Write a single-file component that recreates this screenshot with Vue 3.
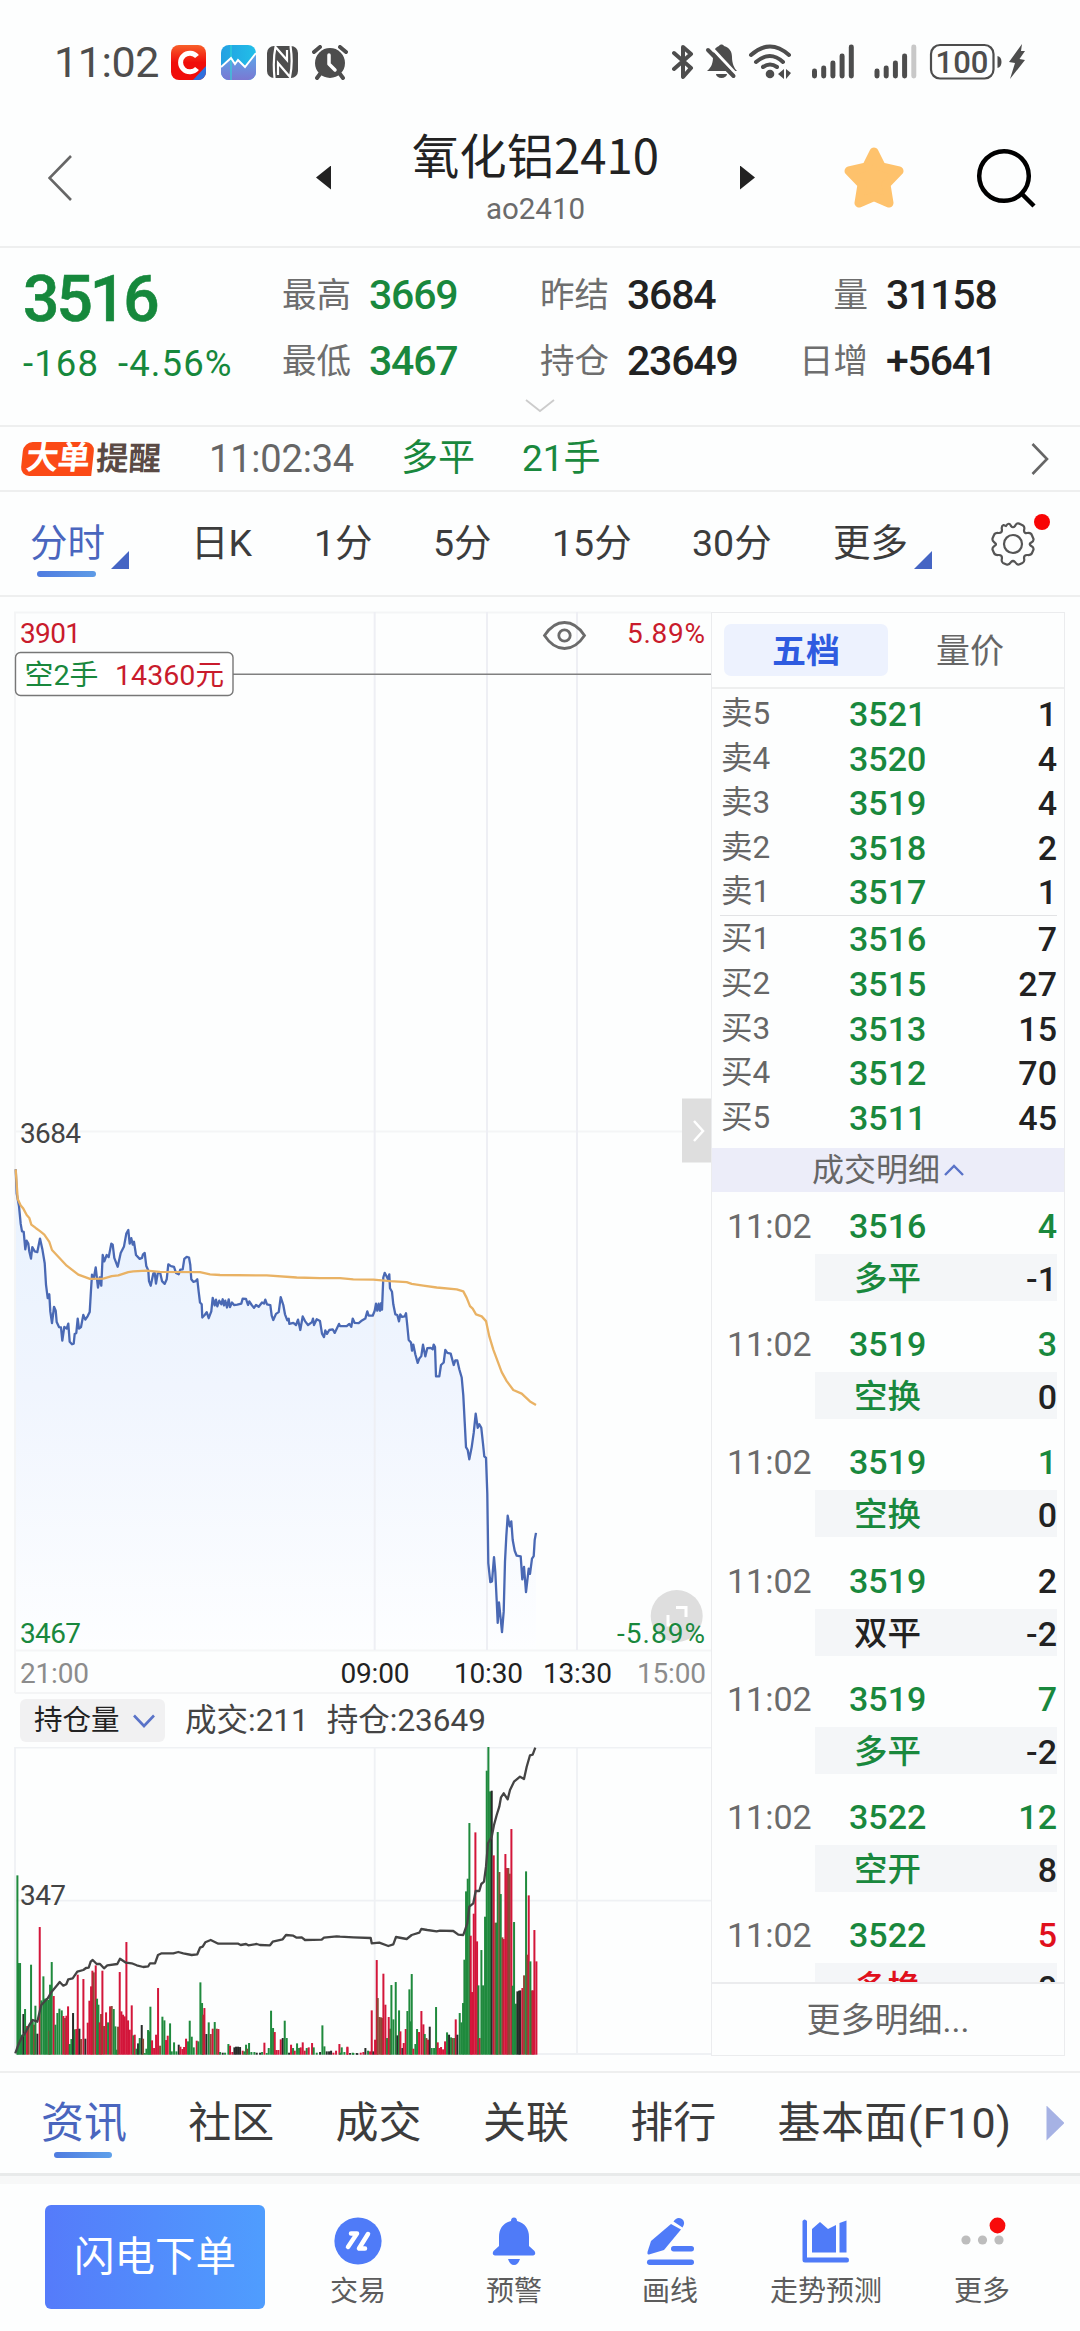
<template>
  <div class="page">
    <div class="status">
      <span class="clock">11:02</span>
      <svg class="app-icon" width="35" height="35" viewBox="0 0 35 35">
        <defs>
          <linearGradient id="gRed" x1="0" y1="0" x2="0" y2="1">
            <stop offset="0" stop-color="#f8602a" />
            <stop offset="0.5" stop-color="#f00d0a" />
          </linearGradient>
          <clipPath id="cApp"><rect width="35" height="35" rx="8" /></clipPath>
        </defs>
        <g clip-path="url(#cApp)">
          <rect width="35" height="35" fill="url(#gRed)" />
          <path d="M35 21L22 35H35Z" fill="#2f6fdc" />
          <path d="M26 11.500A9.300 9.300 0 1 0 26 23.500" fill="none" stroke="#fff" stroke-width="5" />
        </g>
      </svg>
      <svg class="wave-icon" width="35" height="35" viewBox="0 0 35 35">
        <defs>
          <linearGradient id="gSky" x1="0" y1="0" x2="1" y2="0">
            <stop offset="0" stop-color="#23a0e2" />
            <stop offset="1" stop-color="#22bfe8" />
          </linearGradient>
          <linearGradient id="gSea" x1="0" y1="0" x2="0" y2="1">
            <stop offset="0" stop-color="#5aa9ec" />
            <stop offset="1" stop-color="#7a78d2" />
          </linearGradient>
        </defs>
        <g clip-path="url(#cApp)">
          <rect width="35" height="35" fill="url(#gSky)" />
          <path d="M0 22L10 13L14 19L17 15L24 22L35 8V35H0Z" fill="url(#gSea)" />
          <path d="M10 0V35" stroke="#2fd3d8" stroke-width="1.2" />
          <path d="M0 22L10 13L14 19L17 15L24 22L35 8" fill="none" stroke="#fff" stroke-width="2" />
        </g>
      </svg>
      <svg class="nfc-icon" width="31" height="32" viewBox="0 0 31 32">
        <rect width="31" height="32" rx="7" fill="#4d4d4d" />
        <path d="M7.500 32C6.500 22 6.500 10 8.500 1L20 14V4M23.500 0C25 10 25 22 23 31L11 17V29" fill="none" stroke="#fff" stroke-width="2.200" />
      </svg>
      <svg class="alarm-icon" width="36" height="35" viewBox="0 0 36 35">
        <circle cx="18" cy="18" r="15" fill="#4d4d4d" />
        <path d="M2 7L8 2M34 7L28 2M8 29L5 33M28 29L31 33" stroke="#4d4d4d" stroke-width="4" stroke-linecap="round" />
        <path d="M17 10V19L23 25" fill="none" stroke="#fff" stroke-width="3.500" stroke-linecap="round" stroke-linejoin="round" />
      </svg>
      <svg class="sys-icons" width="354" height="40" viewBox="672 42 354 40">
        <g fill="#4d4d4d">
          <path d="M674 53L691 68L683 77V47L691 54L674 69" fill="none" stroke="#4d4d4d" stroke-width="4" stroke-linejoin="round" stroke-linecap="round" />
          <path d="M707 71C712 67 713 62 713 57C713 50 716 47 719 46C720 44 723 44 724 46C730 48 732 52 732 57C732 63 734 68 737 71Z" />
          <path d="M716 74H727A5.500 4 0 0 1 716 74" />
          <path d="M710 46L737 75" stroke="#fff" stroke-width="3" />
          <path d="M708 50L733.500 76" stroke="#4d4d4d" stroke-width="4" stroke-linecap="round" />
          <path d="M751 55Q770 38 789 55M756 62Q770 50 783 62M763 67Q770 62 777 67" fill="none" stroke="#4d4d4d" stroke-width="4" stroke-linecap="round" />
          <circle cx="770" cy="74" r="4.300" />
          <path d="M784 69V79L778 74Z M786 69V79L791 73Z" />
          <rect v-for="(h, i) in [10, 13, 18, 25, 34]" :key="'a' + i" :x="812 + i * 9.200" :y="78.500 - h" width="5" :height="h" rx="2.400" />
          <rect v-for="(h, i) in [10, 13, 18, 25, 34]" :key="'b' + i" :x="874.500 + i * 9.200" :y="78.500 - h" width="5" :height="h" rx="2.400" :fill="i === 4 ? '#c8c8c8' : '#4d4d4d'" />
          <rect x="931" y="45" width="62.500" height="33.500" rx="9" fill="none" stroke="#4d4d4d" stroke-width="2.200" />
          <text x="962" y="73" class="batt" text-anchor="middle">100</text>
          <path d="M997.500 56Q1001.500 57 1001.500 62Q1001.500 67 997.500 68Z" />
          <path d="M1022 44L1009 62L1015 63L1010 79L1025 60L1019.500 59L1025 51L1021 51Z" />
        </g>
      </svg>
    </div>

    <div class="header">
      <svg width="24" height="46" viewBox="0 0 24 46"><path d="M23 1L1.500 23L23 45" fill="none" stroke="#666" stroke-width="2.600" /></svg>
      <i class="tri-left"></i>
      <div class="title">
        <div class="name">氧化铝2410</div>
        <div class="code">ao2410</div>
      </div>
      <i class="tri-right"></i>
      <svg class="star" width="60" height="62" viewBox="0 0 60 62">
        <path d="M30 5L37.500 20L55 24L42 37.500L45 56L30 49.500L15 56L18 37.500L5 24L22.500 20Z" fill="#fec26c" stroke="#fec26c" stroke-width="9" stroke-linejoin="round" />
      </svg>
      <svg class="search" width="62" height="62" viewBox="0 0 62 62">
        <circle cx="29" cy="29" r="24.800" fill="none" stroke="#000" stroke-width="4.500" />
        <path d="M46 46L59 59" stroke="#000" stroke-width="4.500" />
      </svg>
    </div>

    <div class="quote">
      <div class="last">
        <div class="price">3516</div>
        <div class="change"><span>-168</span><span>-4.56%</span></div>
      </div>
      <div class="stats">
        <div v-for="s in stats" :key="s.label" class="stat">
          <span class="stat-label">{{ s.label }}</span>
          <span class="stat-value" :class="s.green ? 'green' : ''">{{ s.value }}</span>
        </div>
      </div>
      <svg class="expand" width="30" height="14" viewBox="0 0 30 14"><path d="M1 1L15 12L29 1" fill="none" stroke="#ccc" stroke-width="1.800" /></svg>
    </div>

    <div class="alert">
      <div class="badge"><span class="badge-hot">大单</span><span class="badge-text">提醒</span></div>
      <span class="alert-time">11:02:34</span>
      <span class="alert-kind">多平</span>
      <span class="alert-vol">21手</span>
      <svg class="alert-arrow" width="18" height="32" viewBox="0 0 18 32"><path d="M1.500 1L16 16L1.500 31" fill="none" stroke="#666" stroke-width="2.600" /></svg>
    </div>

    <div class="periods">
      <div v-for="p in periods" :key="p.name" class="period" :class="{ active: p.active, corner: p.corner }">{{ p.name }}</div>
      <div class="gear">
        <svg width="44" height="44" viewBox="0 0 44 44" fill="none" stroke="#555" stroke-width="2.200">
          <path d="M15 4C17 0.500 19 1.500 20 4Q22 6.500 24 4C25 1.500 27 0.500 29 2L32 3.500C34.500 5 33 7 33 9Q33.500 11.500 36 11C39 10.500 40.500 11 41 13.500L42.500 17C43 19.500 41 20 39.500 21Q38 22 39.500 23.500C41 24.500 43 25 42.500 27.500L41 31C40 33.500 38 33 36 33Q33 33 33 36C33.500 38.500 34 40 31.500 41L28 42.500C26 43 25 41.500 24 40Q22 38 20 40C19 41.500 18 43.500 15.500 42.500L12 41C10 40 10.500 38 11 36Q11 33 8 33C5.500 33 4 33.500 3 31L1.500 27.500C1 25.500 3 24.500 4 23.500Q6 22 4 21C2.500 19.500 1 19 1.500 16.500L3 13C4 10.500 6 11 8 11Q11 11 11 8C10.500 6 10 4 12.500 3Z" stroke-linejoin="round" />
          <circle cx="22" cy="22" r="9" />
        </svg>
        <i class="dot"></i>
      </div>
    </div>

    <div class="main">
      <div class="charts">
        <svg class="chart" width="711" height="1097" viewBox="0 597 711 1097">
          <defs>
            <linearGradient id="gArea" gradientUnits="userSpaceOnUse" x1="0" y1="1170" x2="0" y2="1650">
              <stop offset="0" stop-color="#e8f2fe" />
              <stop offset="0.450" stop-color="#f0f5fe" />
              <stop offset="1" stop-color="#fdfeff" />
            </linearGradient>
          </defs>
          <path :d="areaPath" fill="url(#gArea)" />
          <g stroke="#eeeff4" stroke-width="2">
            <path d="M14 612.500H711M15 612V1693M15 1131.500H711M15 1650.500H711M15 1693H711" stroke="#f4f5f6" />
            <path d="M374.700 612V1650M487 612V1650M577 612V1650" />
          </g>
          <path :d="pricePath" class="line" stroke="#4a69b4" />
          <path :d="avgPath" class="line" stroke="#e9b264" />
          <path d="M233 674.300H711" stroke="#808080" stroke-width="1.600" />
          <rect x="15.500" y="652.500" width="217.500" height="43" rx="5" fill="#fff" stroke="#777" stroke-width="1.400" />
          <text x="24.500" y="684.500" class="lbl green" textLength="74" lengthAdjust="spacingAndGlyphs">空2手</text>
          <text x="115" y="684.500" class="lbl red" textLength="109" lengthAdjust="spacingAndGlyphs">14360元</text>
          <g fill="none" stroke="#6b6b6b" stroke-width="2.800">
            <path d="M544.500 635.500Q553 622.500 564.500 622.500T584.500 635.500Q576 648.500 564.500 648.500T544.500 635.500Z" />
            <circle cx="564.500" cy="635.500" r="5.700" />
          </g>
          <path d="M682 1098.500H711V1162.500H682Z" fill="#dedede" />
          <path d="M694 1121L703 1131L694 1141" fill="none" stroke="#fff" stroke-width="2.500" />
          <circle cx="676.700" cy="1616" r="26" fill="#dedede" />
          <path d="M676 1607.500H686V1617M668 1615V1625H677" fill="none" stroke="#fff" stroke-width="3" />
          <text x="20" y="643" class="lbl red" textLength="61">3901</text>
          <text x="627" y="643" class="lbl red" textLength="78">5.89%</text>
          <text x="20" y="1142.500" class="lbl dark" textLength="61">3684</text>
          <text x="20" y="1643" class="lbl green" textLength="61">3467</text>
          <text x="617" y="1643" class="lbl green" textLength="88">-5.89%</text>
          <text v-for="t in ticks" :key="t.text" :x="t.x" y="1683" class="lbl" :class="t.edge ? 'tick-edge' : 'tick'" textLength="69">{{ t.text }}</text>
        </svg>

        <div class="sub-head">
          <div class="chip">
            <span>持仓量</span>
            <svg width="22" height="14" viewBox="0 0 22 14"><path d="M1 1.500L11 12L21 1.500" fill="none" stroke="#5a73c8" stroke-width="2.600" /></svg>
          </div>
          <span class="sub-text">成交:211</span>
          <span class="sub-text">持仓:23649</span>
        </div>

        <svg class="chart" width="711" height="324" viewBox="0 1747 711 324">
          <g stroke="#eff1f4" stroke-width="1.800">
            <path d="M15 1747.500H711M15 1747V2054M15 1900.700H711M15 2054H711M374.700 1747V2054M487 1747V2054M577 1747V2054" />
          </g>
          <rect v-for="(b, i) in bars" :key="i" :x="b.x" :y="2054.700 - b.h" width="2" :height="b.h" :fill="b.fill" />
          <path :d="holdPath" class="line" stroke="#444" />
          <text x="20" y="1905" class="lbl dark" textLength="46">347</text>
        </svg>
      </div>

      <div class="book">
        <div class="book-tabs">
          <div class="book-tab on">五档</div>
          <div class="book-tab">量价</div>
        </div>
        <div class="levels">
          <div v-for="l in asks" :key="l[0]" class="level"><span>{{ l[0] }}</span><b>{{ l[1] }}</b><em>{{ l[2] }}</em></div>
          <div class="split"></div>
          <div v-for="l in bids" :key="l[0]" class="level"><span>{{ l[0] }}</span><b>{{ l[1] }}</b><em>{{ l[2] }}</em></div>
        </div>
        <div class="detail-head">
          <span>成交明细</span>
          <svg width="20" height="12" viewBox="0 0 20 12"><path d="M1 11L10 2L19 11" fill="none" stroke="#5a73c8" stroke-width="2.400" /></svg>
        </div>
        <div class="trades">
          <div v-for="(t, i) in trades" :key="i" class="trade">
            <div class="trade-top"><span>11:02</span><b>{{ t.price }}</b><em :class="t.volColor">{{ t.vol }}</em></div>
            <div class="trade-sub"><b :class="t.kindColor">{{ t.kind }}</b><em>{{ t.diff }}</em></div>
          </div>
        </div>
        <div class="more">更多明细...</div>
      </div>
    </div>

    <div class="info-tabs">
      <span class="info active">资讯</span>
      <span class="info">社区</span>
      <span class="info">成交</span>
      <span class="info">关联</span>
      <span class="info">排行</span>
      <span class="info">基本面(F10)</span>
      <i class="info-next"></i>
    </div>

    <div class="actions">
      <div class="order-btn">闪电下单</div>
      <div class="action">
        <svg width="48" height="48" viewBox="0 0 48 48">
          <circle cx="24" cy="24" r="23.600" fill="#4f7bf8" />
          <path d="M17 16.500H23L14 30M34 17L25 31.500H31" fill="none" stroke="#fff" stroke-width="4.500" stroke-linecap="round" stroke-linejoin="round" />
        </svg>
        <span>交易</span>
      </div>
      <div class="action">
        <svg width="48" height="48" viewBox="0 0 48 48" fill="#4f7bf8">
          <path d="M24 0.500C26 0.500 27 2 27 4C35 6 39 12 39 20V29L44.500 34C46 36.500 45 38.500 43 38.500H5C3 38.500 2 36.500 3.500 34L9 29V20C9 12 13 6 21 4C21 2 22 0.500 24 0.500Z" />
          <path d="M18 42H30Q28 48 24 48T18 42Z" />
        </svg>
        <span>预警</span>
      </div>
      <div class="action">
        <svg width="48" height="48" viewBox="0 0 48 48" fill="#4f7bf8">
          <path d="M25 7L35 12.500L18 33L3 37.500Q1 38 1.500 35L5 24Z" />
          <path d="M27.500 4.500Q31 -1 36 2Q40 5 36.500 10.500Z" />
          <rect x="25" y="29" width="23" height="5.500" rx="2.700" />
          <rect x="1" y="42.500" width="47" height="5.500" rx="2.700" />
        </svg>
        <span>画线</span>
      </div>
      <div class="action">
        <svg width="48" height="48" viewBox="0 0 48 48" fill="#4f7bf8">
          <path d="M0.500 4Q2.500 1 5 4V40.500H45Q47 40.500 47 43T45 45.500H3Q0.500 45.500 0.500 43Z" />
          <path d="M10 12L18 5L26 12L34 8V35.500H10Z" />
          <path d="M37.500 6L44.500 3.500V35.500H37.500Z" />
        </svg>
        <span>走势预测</span>
      </div>
      <div class="action">
        <svg width="48" height="48" viewBox="0 0 48 48">
          <circle cx="8" cy="23" r="4.600" fill="#bdbdbd" />
          <circle cx="24.500" cy="23" r="4.600" fill="#bdbdbd" />
          <circle cx="41" cy="23" r="4.600" fill="#bdbdbd" />
          <circle cx="39.500" cy="8.500" r="7.900" fill="#f80b0b" />
        </svg>
        <span>更多</span>
      </div>
    </div>
  </div>
</template>

<script setup>
const stats = [
  { label: '最高', value: '3669', green: true },
  { label: '昨结', value: '3684' },
  { label: '量', value: '31158' },
  { label: '最低', value: '3467', green: true },
  { label: '持仓', value: '23649' },
  { label: '日增', value: '+5641' },
]

const periods = [
  { name: '分时', active: true, corner: true },
  { name: '日K' },
  { name: '1分' },
  { name: '5分' },
  { name: '15分' },
  { name: '30分' },
  { name: '更多', corner: true },
]

const ticks = [
  { text: '21:00', x: 20, edge: true },
  { text: '09:00', x: 340.5 },
  { text: '10:30', x: 454 },
  { text: '13:30', x: 543 },
  { text: '15:00', x: 637, edge: true },
]

const asks = [['卖5', 3521, 1], ['卖4', 3520, 4], ['卖3', 3519, 4], ['卖2', 3518, 2], ['卖1', 3517, 1]]
const bids = [['买1', 3516, 7], ['买2', 3515, 27], ['买3', 3513, 15], ['买4', 3512, 70], ['买5', 3511, 45]]

const trades = [
  { price: 3516, vol: 4, volColor: 'green', kind: '多平', kindColor: 'green', diff: '-1' },
  { price: 3519, vol: 3, volColor: 'green', kind: '空换', kindColor: 'green', diff: '0' },
  { price: 3519, vol: 1, volColor: 'green', kind: '空换', kindColor: 'green', diff: '0' },
  { price: 3519, vol: 2, volColor: '', kind: '双平', kindColor: '', diff: '-2' },
  { price: 3519, vol: 7, volColor: 'green', kind: '多平', kindColor: 'green', diff: '-2' },
  { price: 3522, vol: 12, volColor: 'green', kind: '空开', kindColor: 'green', diff: '8' },
  { price: 3522, vol: 5, volColor: 'red', kind: '多换', kindColor: 'red', diff: '0' },
]

// series are split in night and day session, each with its own x origin
const DAY_X = 340

function toPoints(str, x0, y0, ky) {
  return str.trim().split(/\s+/).map((p) => {
    const [x, y] = p.split(',').map(Number)
    return [(x0 + x / 3).toFixed(1), (y0 + y / ky).toFixed(1)]
  })
}

function toPath(night, day, y0, ky) {
  const pts = [...toPoints(night, 0, y0, ky), ...toPoints(day, DAY_X, y0, ky)]
  return 'M' + pts.map((p) => p.join(' ')).join('L')
}

const pricePath = toPath(
  `47,82 50,150 57,185 62,235 66,256 71,257 76,306 80,282 85,290 88,312 93,332 97,300 104,312 112,314 120,276 127,305
  134,345 138,405 143,443 148,432 151,480 156,513 162,467 167,478 170,510 177,524 183,525 187,562 193,523 200,528 205,514
  209,565 216,572 221,570 224,543 229,540 233,500 237,528 243,524 250,490 256,503 263,493 269,482 273,420 276,377 281,388
  287,357 294,413 299,385 304,408 308,322 313,340 320,322 326,328 334,290 338,293 343,330 353,355 362,316 372,298 379,262
  385,252 389,290 394,275 398,293 402,285 408,322 419,333 426,330 429,320 434,316 439,353 445,365 447,395 452,408 460,374
  464,372 468,402 473,374 480,370 486,395 494,403 500,390 505,348 513,353 522,355 528,372 536,376 541,363 548,362 553,333
  560,327 567,329 571,350 574,390 580,397 587,395 592,390 596,425 600,455 605,460 607,497 614,490 620,482 626,499 634,480
  638,442 644,463 648,447 652,466 658,450 664,460 668,446 672,463 676,450 681,469 686,446 690,468 696,455 702,462 712,461
  724,458 728,444 738,445 744,462 748,452 755,462 762,470 768,462 776,467 786,455 792,458 796,447 801,460 811,462 815,492
  820,504 828,487 836,482 842,440 850,462 855,488 862,505 866,500 868,515 880,512 888,518 894,503 901,532 908,494 915,507
  924,518 936,510 939,500 942,518 950,502 960,507 966,542 972,552 976,533 981,543 988,532 998,530 1004,540 1017,515`,
  `0,521 20,521 28,515 34,523 38,500 44,512 56,513 66,505 76,500 82,480 86,492 98,492 104,478 108,458 112,478 116,458
  120,478 124,456 126,475 130,385 134,372 139,380 144,390 148,376 150,415 156,425 160,460 166,488 172,490 177,508 181,488
  186,495 194,494 198,485 202,520 206,560 213,567 216,590 220,573 226,600 233,624 238,612 244,605 249,573 256,606 262,583
  272,582 278,586 281,573 285,580 288,662 298,662 303,630 311,623 316,588 322,596 332,598 341,630 346,617 352,617 358,642
  365,665 370,715 374,790 378,860 383,868 388,894 395,860 401,820 407,766 413,806 418,796 424,806 429,850 433,886 438,890
  442,990 445,1185 451,1238 456,1236 462,1168 466,1210 470,1290 473,1352 477,1295 481,1330 486,1378 491,1320 495,1180
  499,1110 503,1052 509,1082 514,1068 518,1120 524,1150 530,1164 542,1166 547,1230 552,1195 558,1266 566,1200 570,1215
  576,1172 581,1165 584,1120 588,1100`,
  1140, 2.8
)
const areaPath = pricePath + 'L536 1650L15.7 1650Z'

const avgPath = toPath(
  `47,82 53,165 62,183 70,192 80,210 88,218 94,237 108,247 120,255 133,265 148,285 156,308 175,327 200,352 235,377
  270,389 310,388 335,381 355,379 385,370 400,368 440,366 480,369 600,370 630,376 660,378 800,379 890,385 960,387`,
  `0,387 40,390 100,391 150,395 200,398 215,403 250,408 290,413 350,418 370,424 380,442 390,465 398,472 408,488
  425,494 438,507 448,550 460,587 472,617 485,650 500,675 520,700 545,710 570,732 588,742`,
  1140, 2.8
)

const holdPath = toPath(
  `46,1090 55,1065 65,1042 75,1030 88,1005 98,990 112,995 118,970 124,945 143,925 155,905 172,885 179,876 190,887
  199,883 205,868 218,865 232,845 250,840 258,834 266,833 272,815 278,810 290,822 300,822 312,835 322,826 352,822
  360,806 378,818 395,820 410,826 430,831 445,829 450,820 465,820 474,795 485,790 520,790 535,786 550,790 575,795
  592,793 600,773 608,770 616,757 632,750 655,761 715,761 722,765 738,762 745,766 770,762 780,765 810,766 818,755
  848,748 858,735 880,737 890,743 905,742 915,750 965,749 972,743 1010,739`,
  `0,740 40,742 92,744 95,760 118,758 145,768 160,763 168,741 200,747 215,735 238,728 244,717 262,720 290,724
  300,722 340,723 355,734 370,735 382,700 388,650 400,640 407,603 418,603 424,582 432,575 438,530 444,460 455,440
  462,405 470,375 478,350 483,322 491,310 503,328 510,300 522,275 540,260 552,267 560,230 570,196 578,194 586,173`,
  1690, 3
)

// g = sell side, r = buy side, k = neutral, m = mixed; then the bar height
const fills = { g: '#1f8a3d', r: '#d3163a', k: '#262b28', m: '#8b4a37' }

const nightBars = `52 g538,55 g275,60 g275,65 g60,70 k122,75 g137,81 r86,86 m85,93 g270,98 g100,102 m90,106 g147,112 k63,119 r383,
124 g163,130 g235,135 g168,140 g170,145 g165,148 m72,150 g210,155 g278,161 r176,166 g90,172 g125,178 g138,185 g133,190 r116,
195 m110,199 r117,204 r145,209 g32,214 g47,219 k125,224 g76,229 r77,233 r240,238 k78,243 m47,250 r227,256 k48,263 r96,
268 r162,273 r205,277 r252,281 m247,287 r268,291 g168,295 g150,299 r97,303 m122,307 r252,312 m86,318 r127,324 g97,330 r145,
335 m146,341 g137,346 g85,350 g15,354 m84,359 r248,364 r130,369 r120,374 r115,379 r338,384 r103,389 r75,395 r148,400 g58,
404 r60,409 g18,414 k34,419 g50,425 k89,429 m48,434 g5,439 g18,444 g74,448 g70,451 g144,456 r43,462 r20,468 r60,474 r200,
480 m27,487 g114,493 g103,498 r44,503 r57,510 g94,515 g10,522 g37,529 g10,536 k30,541 r24,547 r17,552 r23,558 r48,564 g40,
569 g102,575 g54,581 g22,590 r42,595 g40,601 g217,606 g155,609 m120,613 r140,619 k62,626 g97,632 m62,638 r78,644 g98,650 m78,
655 r77,660 g8,668 k6,675 g6,685 g32,690 r27,697 r8,703 k22,708 k24,714 k24,720 k23,728 r12,733 g10,738 g30,742 m18,747 g35,
754 g8,763 g8,770 k6,780 k6,786 g8,793 r36,800 g5,806 g20,813 g132,819 g80,824 r68,829 r14,835 r14,842 r46,848 k50,854 g102,
860 g50,867 k6,873 r30,879 g20,884 r12,891 g34,897 g20,902 r22,908 r37,914 r12,920 g20,926 r22,936 r35,941 g22,950 g6,
960 k8,967 g88,973 g25,980 k10,987 k10,993 k12,1000 r6,1008 r12,1018 r32,1025 g22,1033 g8,1042 r22,1050 k5,1060 g5,1070 k5`

const dayBars = `0 g6,22 r24,38 g6,52 k4,62 r6,70 r8,76 k20,84 g12,90 r10,95 r133,100 k10,105 r45,110 r284,113 m170,118 m113,
123 m112,127 m110,130 r243,136 r150,141 g50,146 r113,150 m78,154 g209,160 g106,167 g218,172 k58,177 g133,181 r70,187 k20,
191 r35,197 r77,202 g131,208 g196,212 g100,215 g242,220 r18,226 g32,231 g77,237 r68,244 r131,250 r91,254 g62,259 m50,
264 r45,269 k84,275 g20,282 g20,288 g143,293 r37,298 r20,303 r23,309 r16,315 r40,321 g67,327 k60,333 g52,338 m50,343 g50,
347 r106,352 k60,359 g125,364 g97,369 g155,373 g285,378 g490,383 g528,388 g695,392 r357,396 r188,401 r423,406 r667,411 r340,
415 g208,419 r50,424 g314,429 g208,435 g414,440 g852,445 g925,450 g790,455 k792,461 r598,466 m396,470 g396,473 g668,478 m548,
482 g482,487 m352,491 r347,496 r602,501 r560,505 m560,509 m543,514 r677,518 g207,522 g398,527 g153,532 k190,537 k192,541 k193,
547 r200,552 m238,558 g550,562 m300,566 r478,571 g280,575 m193,579 r193,583 r374,589 r280`

function toBars(str, x0) {
  return str.split(',').map((s) => {
    const [x, v] = s.trim().split(' ')
    return { x: x0 + (x - 2.8) / 3, h: v.slice(1) / 3, fill: fills[v[0]] }
  })
}

const bars = [...toBars(nightBars, 0), ...toBars(dayBars, DAY_X)]
</script>

<style>
body {
  margin: 0;
  background: #fdfefe;
}
</style>

<style scoped>
.page {
  width: 1080px;
  height: 2331px;
  overflow: hidden;
  background: #fdfefe;
  font-family: Roboto, "Noto Sans CJK SC", sans-serif;
  color: #222;
}
.page svg {
  display: block;
  flex-shrink: 0;
}
b, em, i {
  font-style: normal;
}
.green {
  color: #19883d;
  fill: #19883d;
}
.red {
  color: #e0101c;
  fill: #c91b2c;
}

/* status bar */
.status {
  display: flex;
  align-items: center;
  height: 104px;
  box-sizing: border-box;
  padding: 20px 54px 0 54px;
}
.clock {
  width: 117px;
  font-size: 43px;
  line-height: 40px;
  letter-spacing: -0.400px;
  color: #4d4d4d;
}
.wave-icon {
  margin-left: 15px;
}
.nfc-icon {
  margin-left: 11px;
}
.alarm-icon {
  margin-left: 14px;
}
.sys-icons {
  margin-left: auto;
}
.batt {
  font-size: 31px;
  font-weight: 500;
}

/* header */
.header {
  display: flex;
  align-items: center;
  height: 144px;
  box-sizing: border-box;
  padding: 5px 0 0 48px;
  border-bottom: 2px solid #eeefef;
}
.tri-left, .tri-right {
  width: 15px;
  height: 24px;
  background: #222;
}
.tri-left {
  margin-left: 244px;
  clip-path: polygon(100% 0, 100% 100%, 0 50%);
}
.tri-right {
  clip-path: polygon(0 0, 100% 50%, 0 100%);
}
.title {
  width: 409px;
  padding-bottom: 3px;
  text-align: center;
}
.name {
  font-family: "Noto Sans CJK SC", sans-serif;
  font-size: 47.300px;
  line-height: 60px;
}
.code {
  padding-top: 5px;
  font-size: 29.500px;
  line-height: 40px;
  color: #6b6b6b;
}
.star {
  margin-left: 89px;
}
.search {
  margin-left: 71px;
}

/* quote */
.quote {
  position: relative;
  display: flex;
  height: 179px;
  box-sizing: border-box;
  padding: 14px 0 0 23px;
  border-bottom: 2px solid #eeefef;
}
.last {
  width: 258px;
  color: #16883c;
}
.price {
  padding-top: 5px;
  font-size: 64px;
  line-height: 66px;
  font-weight: 500;
  letter-spacing: -3px;
  -webkit-text-stroke: 0.600px #16883c;
}
.change {
  display: flex;
  gap: 19px;
  padding-top: 11px;
  font-size: 36.500px;
  line-height: 40px;
  letter-spacing: 1.100px;
  white-space: nowrap;
}
.stats {
  display: grid;
  grid-template-columns: 258px 259px 260px;
  grid-auto-rows: 66px;
}
.stat {
  display: flex;
  align-items: center;
  gap: 18px;
}
.stat-label {
  width: 70px;
  text-align: right;
  font-size: 34.500px;
  line-height: 67px;
  color: #6e6e6e;
}
.stat-value {
  font-size: 41px;
  line-height: 66px;
  font-weight: 500;
  letter-spacing: -1.200px;
}
.expand {
  position: absolute;
  left: 525px;
  top: 151px;
}

/* big order alert */
.alert {
  display: flex;
  align-items: center;
  height: 65px;
  box-sizing: border-box;
  padding-left: 22px;
  border-bottom: 2px solid #eeefef;
  line-height: 60px;
}
.badge {
  display: flex;
  align-items: center;
  width: 187px;
  font-size: 32.500px;
  font-weight: 700;
}
.badge-hot {
  width: 67px;
  height: 34px;
  line-height: 33px;
  padding-left: 4px;
  border-radius: 9px 9px 0 9px;
  background: #fb4a16;
  color: #fff;
  letter-spacing: -1px;
  transform: skewX(-6deg);
}
.badge-text {
  padding-left: 3px;
  color: #5a4a45;
  transform: skewX(-3deg);
}
.alert-time {
  width: 192px;
  font-size: 38px;
  letter-spacing: -0.200px;
  color: #666;
}
.alert-kind {
  width: 121px;
  font-size: 37px;
  color: #19883d;
}
.alert-vol {
  font-size: 37px;
  color: #19883d;
}
.alert-arrow {
  margin-left: auto;
  margin-right: 31px;
}

/* period tabs */
.periods {
  display: grid;
  grid-template-columns: 161px 123px 119px 119px 140px 141px 158px auto;
  align-items: center;
  height: 105px;
  box-sizing: border-box;
  padding-left: 30px;
  border-bottom: 2px solid #eeefef;
  font-size: 37.500px;
  line-height: 103px;
  color: #3c3c3c;
}
.period {
  position: relative;
  height: 103px;
}
.period.active {
  color: #4a66be;
}
.period.active::before {
  content: "";
  position: absolute;
  left: 7px;
  top: 79px;
  width: 59px;
  height: 6px;
  border-radius: 3px;
  background: linear-gradient(90deg, #4f7be0, #5e9be6);
}
.period.corner::after {
  content: "";
  position: absolute;
  left: 81px;
  top: 59px;
  width: 18px;
  height: 18px;
  background: #4565c4;
  clip-path: polygon(100% 0, 100% 100%, 0 100%);
}
.gear {
  position: relative;
  width: 44px;
}
.dot {
  position: absolute;
  left: 43px;
  top: -8px;
  width: 16px;
  height: 16px;
  border-radius: 50%;
  background: #f80505;
}

/* charts */
.main {
  display: flex;
  height: 1474px;
}
.charts {
  width: 711px;
}
.line {
  fill: none;
  stroke-width: 2.300;
  stroke-linejoin: round;
}
.lbl {
  font-size: 28px;
}
.lbl.dark {
  fill: #444;
}
.lbl.tick {
  fill: #222;
}
.lbl.tick-edge {
  fill: #8c8c8c;
}
.sub-head {
  display: flex;
  align-items: center;
  gap: 18px;
  height: 53px;
  padding-left: 20px;
}
.chip {
  display: flex;
  align-items: center;
  gap: 13px;
  width: 131px;
  height: 43px;
  padding-left: 14px;
  border-radius: 6px;
  background: #f1f1f2;
  font-size: 28.500px;
  line-height: 42px;
  color: #222;
}
.sub-text {
  font-size: 31.500px;
  line-height: 54px;
  color: #444;
}
.chip + .sub-text {
  padding-left: 2px;
}

/* order book */
.book {
  width: 352px;
  height: 1442px;
  margin-top: 15px;
  border: 1.500px solid #ebecee;
  box-sizing: content-box;
}
.book-tabs {
  display: flex;
  height: 76px;
  padding: 11px 10px 0 12px;
  box-sizing: border-box;
  border-bottom: 2px solid #eeefef;
}
.book-tab {
  width: 164px;
  height: 52px;
  border-radius: 7px;
  text-align: center;
  font-size: 34px;
  line-height: 54px;
  color: #666;
}
.book-tab.on {
  background: #edf2fe;
  color: #2e5be0;
  font-weight: 700;
}
.levels {
  height: 459px;
  padding: 3px 7px 0 9px;
  box-sizing: border-box;
}
.level, .trade-top {
  display: grid;
  grid-template-columns: 128px 101px 1fr;
  height: 44.600px;
  line-height: 44.600px;
  font-size: 34px;
}
.level span {
  font-size: 31.500px;
  color: #666;
}
.level b, .level em, .trade b, .trade em {
  font-weight: 500;
}
.level b, .trade-top b {
  color: #19883d;
}
.level em, .trade em {
  text-align: right;
}
.split {
  height: 1px;
  margin: 0 0 1.500px -1px;
  background: #e2e3e5;
}
.detail-head {
  display: flex;
  align-items: center;
  justify-content: center;
  gap: 4px;
  height: 44px;
  background: #ecedf9;
  font-size: 32px;
  line-height: 48px;
  color: #666;
}
.trades {
  height: 790px;
  overflow: hidden;
  padding: 0 7px 0 15px;
}
.trade {
  height: 118.200px;
}
.trade-top {
  grid-template-columns: 122px 100px 1fr;
  height: 62px;
  line-height: 69px;
}
.trade-top span {
  color: #6b6b6b;
}
.trade-sub {
  display: grid;
  grid-template-columns: 107px 1fr;
  height: 47px;
  margin-left: 88px;
  padding-left: 39px;
  background: #f4f6f8;
  font-size: 33.500px;
  line-height: 50px;
}
.trade-sub em {
  font-size: 34px;
}
.more {
  height: 71px;
  border-top: 2px solid #ebecee;
  text-align: center;
  font-size: 34px;
  line-height: 73px;
  color: #666;
}

/* bottom tabs */
.info-tabs {
  display: flex;
  align-items: center;
  height: 105px;
  box-sizing: border-box;
  padding-left: 41px;
  border-top: 2px solid #eeefef;
  border-bottom: 3px solid #e8eaea;
  font-size: 43px;
  line-height: 101px;
  color: #3c3c3c;
}
.info {
  position: relative;
  height: 100px;
  width: 147.300px;
  white-space: nowrap;
}
.info:nth-child(6) {
  width: 269px;
  letter-spacing: 0.400px;
}
.info.active {
  color: #4a66be;
}
.info.active::after {
  content: "";
  position: absolute;
  left: 13px;
  top: 79px;
  width: 58px;
  height: 6px;
  border-radius: 3px;
  background: linear-gradient(90deg, #4f7be0, #5ea0ea);
}
.info-next {
  width: 18px;
  height: 35px;
  background: #a6b2e4;
  clip-path: polygon(0 0, 100% 50%, 0 100%);
}

/* action bar */
.actions {
  display: flex;
  height: 155px;
  box-sizing: border-box;
  border-top: 8px solid #f7f8f8;
  padding-left: 45px;
}
.order-btn {
  width: 220px;
  height: 104px;
  margin: 21px 15px 0 0;
  border-radius: 6px;
  background: linear-gradient(90deg, #557bfa, #4f9dfe);
  color: #fff;
  font-size: 40.500px;
  line-height: 104px;
  text-align: center;
}
.action {
  display: flex;
  flex-direction: column;
  align-items: center;
  width: 156px;
  padding-top: 33px;
  font-size: 28px;
  line-height: 32px;
  color: #5c5c5c;
}
.action span {
  padding-top: 11px;
}
</style>
